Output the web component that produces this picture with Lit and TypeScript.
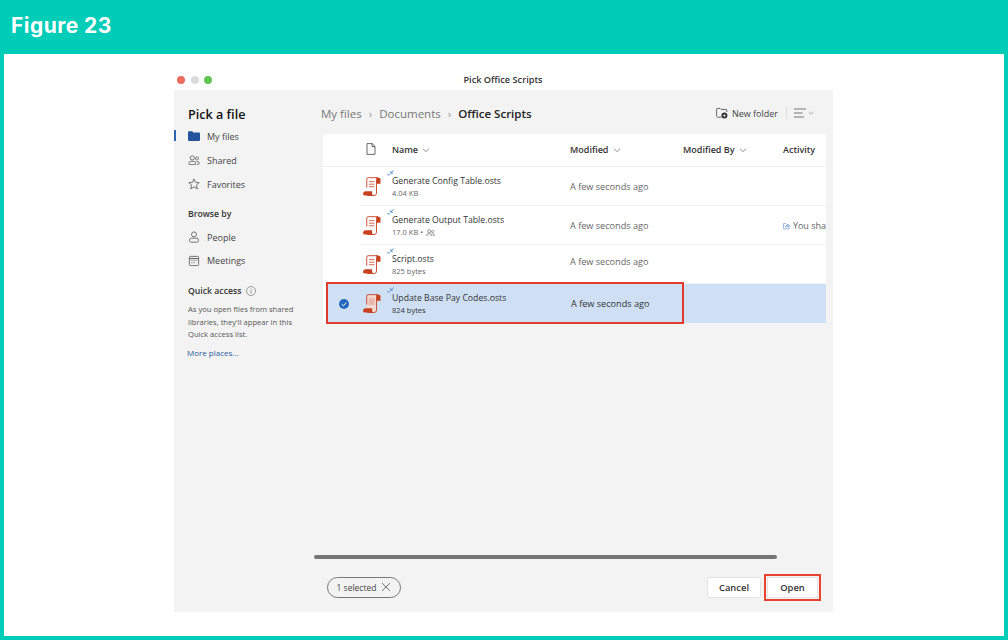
import { LitElement, css, html, svg } from 'lit'
import { customElement } from 'lit/decorators.js'
import { classMap } from 'lit/directives/class-map.js'

const rows = [
  { name: "Generate Config Table.osts", meta: "4.04 KB", shared: false, activity: false, selected: false },
  { name: "Generate Output Table.osts", meta: "17.0 KB •", shared: true, activity: true, selected: false },
  { name: "Script.osts", meta: "825 bytes", shared: false, activity: false, selected: false },
  { name: "Update Base Pay Codes.osts", meta: "824 bytes", shared: false, activity: false, selected: true },
];

const chevron = (size = 8) => html`<svg class="chev" viewBox="0 0 8 8" width=${size} height=${size}><path d="M1 2.8 4 5.6 7 2.8" fill="none" stroke="#777" stroke-width=".8"/></svg>`;

const scriptIcon = (selected: boolean) => html`
  <svg class="script" viewBox="0 0 20 20" width="21" height="21">
    <path d="M4.5 11V3.2Q4.5 1.6 6 1.6H15.2Q13.8 1.6 13.8 3.4V16.4Q13.8 18.6 11.6 18.6H5" fill="${selected ? "#f3d9d2" : "#fff"}" stroke="#c8472a" stroke-width=".9"/>
    <path d="M14 1.6H16Q17.6 1.6 17.6 3.2V7.4H14Z" fill="#c8411f"/>
    <path d="M1 17.4Q1 14.6 3.6 14.6H9.6V16.4Q9.6 18.6 11.6 18.6H3.2Q1 18.6 1 17.4Z" fill="#c8411f"/>
    ${selected
      ? svg`<rect x="6.4" y="5" width="5.6" height="6.4" fill="#e9b7aa"/>`
      : svg`<path d="M6.6 5.4H11.8M6.6 7.8H11.8M6.6 10.2H11.8" stroke="#d2654a" stroke-width=".9"/>`}
  </svg>`;

const syncIcon = html`
  <svg class="sync" viewBox="0 0 9 7" width="8" height="6">
    <path d="M0 5.6H3.4" stroke="#4a8fd0" stroke-width="1"/>
    <path d="M7.8 .4 4.4 3.6M4.2 1.2V3.8H6.8" fill="none" stroke="#4a8fd0" stroke-width="1"/>
  </svg>`;

const peopleIcon = (size: number) => html`
  <svg viewBox="0 0 14 12" width=${size} height=${size * 12 / 14}>
    <circle cx="5" cy="3.4" r="2.4" fill="none" stroke="#555" stroke-width=".9"/>
    <path d="M1 10.2Q1 7.4 3 7.4H7Q9 7.4 9 10.2Q9 11.2 8 11.2H2Q1 11.2 1 10.2Z" fill="none" stroke="#555" stroke-width=".9"/>
    <circle cx="10.4" cy="4" r="1.8" fill="none" stroke="#555" stroke-width=".9"/>
    <path d="M10 7.6H11.4Q13 7.6 13 9.6Q13 10.8 11.8 10.8H10.4" fill="none" stroke="#555" stroke-width=".9"/>
  </svg>`;

@customElement("app-root")
export class AppRoot extends LitElement {
  render() {
    return html`
      <header class="banner">Figure 23</header>
      <div class="sheet">
        <section class="window">
          <div class="titlebar">
            <span class="lights"><i class="red"></i><i class="grey"></i><i class="green"></i></span>
            <span class="wintitle">Pick Office Scripts</span>
          </div>
          <div class="body">
            ${this.renderSidebar()}
            ${this.renderMain()}
          </div>
        </section>
      </div>
    `;
  }

  renderSidebar() {
    return html`
      <aside class="side">
        <h1>Pick a file</h1>
        <a class="nav active">
          <svg viewBox="0 0 12 10" width="12" height="10"><path d="M0 1.2Q0 .2 1 .2H4.2L5.4 1.4H11Q12 1.4 12 2.4V9Q12 10 11 10H1Q0 10 0 9Z" fill="#24549c"/></svg>
          My files
        </a>
        <a class="nav">${peopleIcon(12)} Shared</a>
        <a class="nav">
          <svg viewBox="0 0 12 12" width="12" height="12"><path d="M6 .9 7.5 4.3 11.2 4.7 8.4 7.1 9.3 10.9 6 8.9 2.7 10.9 3.6 7.1 .8 4.7 4.5 4.3Z" fill="none" stroke="#555" stroke-width=".8"/></svg>
          Favorites
        </a>
        <h2 class="browse">Browse by</h2>
        <a class="nav">
          <svg viewBox="0 0 12 12" width="12" height="12"><circle cx="6" cy="3.4" r="2.5" fill="none" stroke="#555" stroke-width=".8"/><path d="M1.4 9.4Q1.4 7.2 3.4 7.2H8.6Q10.6 7.2 10.6 9.4Q10.6 11.2 8.6 11.2H3.4Q1.4 11.2 1.4 9.4Z" fill="none" stroke="#555" stroke-width=".8"/></svg>
          People
        </a>
        <a class="nav short">
          <svg viewBox="0 0 12 12" width="12" height="12"><rect x="1.4" y="1.4" width="9.2" height="9.2" rx="1" fill="none" stroke="#555" stroke-width=".8"/><path d="M1.4 3.6H10.6" stroke="#555" stroke-width="1"/><path d="M3.4 5.6H4.4M5.5 5.6H6.5M7.6 5.6H8.6M3.4 7.8H4.4M5.5 7.8H6.5" stroke="#555" stroke-width=".9"/></svg>
          Meetings
        </a>
        <h2 class="quick">Quick access
          <svg viewBox="0 0 10 10" width="10" height="10"><circle cx="5" cy="5" r="4.5" fill="none" stroke="#666" stroke-width=".6"/><path d="M5 4.4V7.4M5 2.6V3.4" stroke="#666" stroke-width=".7"/></svg>
        </h2>
        <p>As you open files from shared libraries, they'll appear in this Quick access list.</p>
        <a class="more">More places...</a>
      </aside>
    `;
  }

  renderMain() {
    return html`
      <main class="main">
        <div class="topbar">
          <nav class="crumbs">
            <span>My files</span><b>›</b><span>Documents</span><b>›</b><strong>Office Scripts</strong>
          </nav>
          <div class="tools">
            <svg viewBox="0 0 12 12" width="12" height="12"><path d="M.6 9.6V2.2Q.6 1.4 1.4 1.4H4L5 2.4H10Q10.8 2.4 10.8 3.2V5M5.4 10.2H1.2" fill="none" stroke="#444" stroke-width=".8"/><circle cx="8.4" cy="8.6" r="3" fill="#333"/><path d="M8.4 7V10.2M6.8 8.6H10" stroke="#fff" stroke-width=".6"/></svg>
            <span>New folder</span>
            <i class="sep"></i>
            <svg viewBox="0 0 12 10" width="12" height="10"><path d="M0 1H12M0 5H8.5M0 9H10" stroke="#555" stroke-width=".8"/></svg>
            ${chevron(6)}
          </div>
        </div>
        <div class="table">
          <div class="row head">
            <span></span>
            <span class="typecol"><svg viewBox="0 0 10 12" width="10" height="12"><path d="M1 .6H6.2L9 3.4V11.4H1ZM6 .6V3.6H9" fill="none" stroke="#444" stroke-width=".8"/></svg></span>
            <span>Name ${chevron()}</span>
            <span>Modified ${chevron()}</span>
            <span>Modified By ${chevron()}</span>
            <span>Activity</span>
          </div>
          ${rows.map((r) => html`
            <div class=${classMap({ row: true, item: true, selected: r.selected })}>
              <span class="check">
                ${r.selected ? html`<svg viewBox="0 0 10 10" width="10" height="10"><circle cx="5" cy="5" r="5" fill="#2468bd"/><path d="M2.8 5.2 4.4 6.7 7.3 3.6" fill="none" stroke="#fff" stroke-width="1"/></svg>` : null}
              </span>
              <span class="typecol">${scriptIcon(r.selected)}</span>
              <div class="file">
                ${syncIcon}
                <div class="fname">${r.name}</div>
                <div class="meta">${r.meta} ${r.shared ? peopleIcon(9) : null}</div>
              </div>
              <span class="when">A few seconds ago</span>
              <span></span>
              <span class="act">
                ${r.activity ? html`<svg viewBox="0 0 10 10" width="10" height="10"><path d="M4 1.4H1.2Q.6 1.4 .6 2V8.6Q.6 9.2 1.2 9.2H8Q8.6 9.2 8.6 8.6V5M3.4 6.6Q3.8 4 6.4 3.8V2.2L9.4 4.2 6.4 6.2V5Q4.6 5 3.4 6.6Z" fill="none" stroke="#4a86c8" stroke-width=".9"/></svg> You sha` : null}
              </span>
              ${r.selected ? html`<i class="mark"></i>` : null}
            </div>
          `)}
        </div>
        <div class="spacer"></div>
        <div class="scroll"></div>
        <div class="footer">
          <span class="chip">1 selected
            <svg viewBox="0 0 10 10" width="10" height="10"><path d="M1 1 9 9M9 1 1 9" stroke="#555" stroke-width=".8"/></svg>
          </span>
          <span class="buttons">
            <button>Cancel</button>
            <button class="open">Open</button>
          </span>
        </div>
      </main>
    `;
  }

  static styles = css`
    :host {
      display: block;
      width: 1008px;
      height: 640px;
      box-sizing: border-box;
      padding: 0 4px 4px;
      background: #00cdb8;
      font-family: "Open Sans", "Noto Sans", sans-serif;
      color: #242424;
      overflow: hidden;
    }

    .banner {
      height: 54px;
      box-sizing: border-box;
      padding: 13px 0 0 7px;
      color: #fff;
      font: 700 21px/26px "Inter", sans-serif;
      letter-spacing: .45px;
    }

    .sheet {
      height: 582px;
      box-sizing: border-box;
      padding: 18px 171px 24px 170px;
      background: #fff;
    }

    .window {
      display: flex;
      flex-direction: column;
      height: 100%;
    }

    .titlebar {
      height: 18px;
      display: flex;
      align-items: center;
      justify-content: center;
      position: relative;
      flex: none;
    }
    .lights {
      position: absolute;
      left: 3px;
      top: 4px;
      display: flex;
      gap: 5.5px;
    }
    .lights i {
      width: 8px;
      height: 8px;
      border-radius: 50%;
    }
    .red { background: #ec6a5e; }
    .grey { background: #dcdcdc; }
    .green { background: #5fc454; }
    .wintitle {
      font-size: 9.2px;
      font-weight: 600;
      color: #333;
      margin: -3px 1px 0 0;
    }

    .body {
      flex: 1;
      display: flex;
      background: #f3f3f3;
      min-height: 0;
    }

    .side {
      width: 149px;
      flex: none;
      box-sizing: border-box;
      padding: 15px 12px 0 14px;
    }
    h1 {
      margin: 0;
      font-size: 12.6px;
      line-height: 19px;
      font-weight: 600;
      color: #111;
    }
    .nav {
      display: flex;
      align-items: center;
      gap: 7px;
      height: 24px;
      font-size: 9px;
      color: #444;
      position: relative;
    }
    .nav.short { height: 23px; }
    .nav.active::before {
      content: "";
      position: absolute;
      left: -14px;
      top: 6px;
      width: 2px;
      height: 11px;
      background: #2f64b0;
    }
    h2 {
      margin: 0;
      font-size: 8.7px;
      font-weight: 600;
      color: #333;
      line-height: 12px;
    }
    .browse { margin: 12px 0 5px; }
    .quick {
      margin: 13px 0 6px;
      display: flex;
      align-items: center;
      gap: 5px;
    }
    p {
      margin: 0;
      font-size: 7.6px;
      line-height: 12.5px;
      color: #555;
    }
    .more {
      display: block;
      margin: 6px 0 0 -1px;
      font-size: 8px;
      line-height: 12px;
      color: #2c5a9e;
    }

    .main {
      flex: 1;
      min-width: 0;
      display: flex;
      flex-direction: column;
    }

    .topbar {
      height: 44px;
      flex: none;
      display: flex;
      align-items: center;
      justify-content: space-between;
      box-sizing: border-box;
      padding: 2px 19px 0 0;
      margin-left: -2px;
    }
    .crumbs {
      display: flex;
      align-items: center;
      font-size: 11.5px;
      color: #777;
    }
    .crumbs b {
      font-weight: 400;
      margin: 0 7px;
      color: #999;
    }
    .crumbs strong {
      font-weight: 600;
      color: #222;
    }
    .tools {
      display: flex;
      align-items: center;
      font-size: 9px;
      color: #444;
    }
    .tools > svg:first-child { margin-right: 4px; }
    .sep {
      width: 1px;
      height: 12px;
      background: #ddd;
      margin: 0 7px 0 8px;
    }
    .chev { margin-left: 2px; vertical-align: -1px; }

    .table {
      flex: none;
      margin: 0 7px 0 0;
      background: #fff;
      border-radius: 3px 0 0 0;
    }
    .row {
      display: grid;
      grid-template-columns: 37px 32px 178px 113px 100px 43px;
      align-items: center;
      position: relative;
      overflow: hidden;
    }
    .head {
      height: 33px;
      padding-bottom: 2px;
      font-size: 9px;
      font-weight: 600;
      color: #333;
      border-bottom: 1px solid #f0f0f0;
      box-sizing: border-box;
    }
    .head .typecol { padding-left: 6px; }
    .item {
      height: 39px;
      overflow: visible;
    }
    .item::after {
      content: "";
      position: absolute;
      left: 37px;
      right: 0;
      bottom: 0;
      height: 1px;
      background: #f2f2f2;
    }
    .selected { background: linear-gradient(90deg, #fff 4px, #cfe0f5 4px); }
    .selected::after { display: none; }
    .check {
      display: flex;
      justify-content: center;
      padding-left: 4px;
    }
    .typecol { display: flex; align-items: center; }
    .script { margin-left: 2px; margin-top: -1px; }
    .file { position: relative; padding-top: 1px; }
    .sync {
      position: absolute;
      left: -5px;
      top: -4px;
    }
    .fname {
      font-size: 8.7px;
      line-height: 13px;
      color: #333;
    }
    .meta {
      font-size: 7.5px;
      line-height: 11px;
      color: #666;
      margin-top: 0;
      display: flex;
      align-items: center;
      gap: 3px;
    }
    .when {
      font-size: 9.15px;
      color: #666;
    }
    .item:nth-child(4) .when { margin-bottom: 6px; }
    .selected .when { color: #333; padding-left: 1px; }
    .selected .fname, .selected .meta { color: #333; }
    .act {
      font-size: 9px;
      color: #666;
      white-space: nowrap;
      overflow: hidden;
      display: flex;
      align-items: center;
      gap: 3px;
    }
    .mark {
      position: absolute;
      left: 3px;
      top: -2px;
      width: 358px;
      height: 42px;
      box-sizing: border-box;
      border: 2px solid #e23a2e;
    }

    .spacer { flex: 1; }
    .scroll {
      flex: none;
      height: 3.5px;
      width: 463px;
      margin-left: -9px;
      background: #757575;
      border-radius: 2px;
    }
    .footer {
      flex: none;
      height: 53.5px;
      box-sizing: border-box;
      display: flex;
      align-items: flex-start;
      justify-content: space-between;
      padding: 18px 15px 0 4px;
    }
    .chip {
      height: 21px;
      width: 74px;
      box-sizing: border-box;
      border: 1px solid #777;
      border-radius: 11px;
      display: flex;
      align-items: center;
      justify-content: center;
      gap: 5px;
      font-size: 8.5px;
      color: #444;
    }
    .buttons {
      display: flex;
      gap: 6px;
    }
    button {
      font: 600 9.4px "Open Sans", sans-serif;
      color: #333;
      background: #fff;
      border: 1px solid #e4e4e4;
      border-radius: 2px;
      height: 21px;
      width: 54px;
      padding: 0;
    }
    .open {
      width: 51px;
      border-radius: 0;
      outline: 2px solid #e8432f;
      outline-offset: 1px;
    }
  `;
}

declare global {
  interface HTMLElementTagNameMap {
    "app-root": AppRoot,
  }
}
